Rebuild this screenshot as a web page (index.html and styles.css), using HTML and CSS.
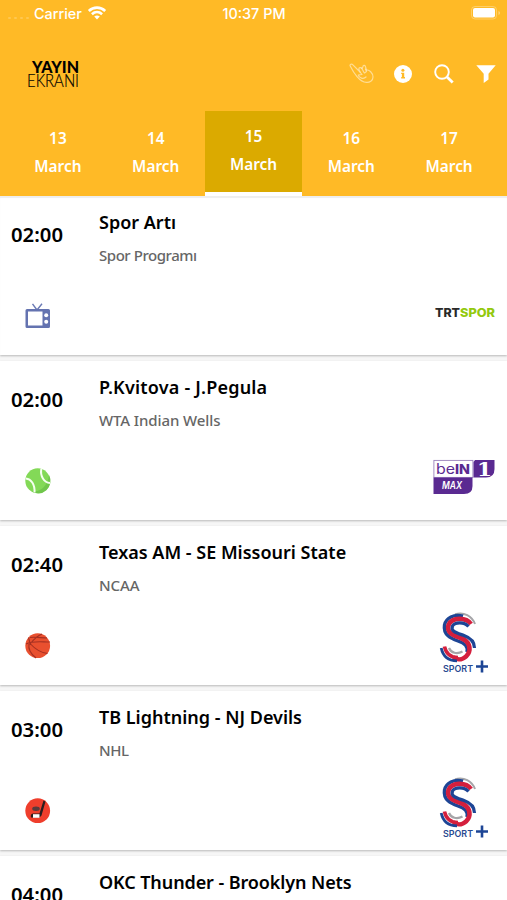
FILE: index.html
```
<!DOCTYPE html>
<html lang="en">
<head>
    <meta charset="utf-8" />
    <title>Yayın Ekranı</title>
    <link rel="stylesheet" href="styles.css">
</head>
<body>
    <svg class="defs" width="0" height="0">
        <symbol id="ssport" viewBox="0 0 50 64">
            <g fill="none">
                <path d="M16 2.200C25 -0.500 33 4 36 12" stroke="#a5a5a8" stroke-width="2" />
                <path d="M24 4.200C15 1.500 7 6 5.500 13C4 23 12 26.500 19 29C26 31.500 29 34 28 40" stroke="#1d4595" stroke-width="3.400" />
                <path d="M32 12C27 5 13 5 9.500 13C7 21 15 23.500 22 26C31 29.500 32 37 29 42C25 48 19 48.500 14 45.500" stroke="#d41f3d" stroke-width="4.600" />
                <path d="M29.500 14.500C25 9.500 16 10 13.500 14C11 19.500 18 21 25 23.500C32 26 35.500 30 35.500 36" stroke="#1d4595" stroke-width="3.200" />
                <path d="M10 36C12 41 18 42.500 23.500 39.500" stroke="#a5a5a8" stroke-width="2.200" />
                <path d="M5.500 34.500C7 42 12 45.500 19 45.500" stroke="#d41f3d" stroke-width="3.600" />
                <path d="M2.200 36C4 44.500 9.500 48.800 18 48.800" stroke="#1d4595" stroke-width="2.800" />
                <path d="M37 54.500H49M43 48.500V60.500" stroke="#1d4595" stroke-width="2.600" />
            </g>
            <text x="4" y="60" textLength="30" lengthAdjust="spacingAndGlyphs" class="ssport-text">SPORT</text>
        </symbol>
    </svg>

    <div class="header">
        <div class="status">
            <div class="carrier">
                <span class="dots"><i></i><i></i><i></i><i></i></span>
                <span>Carrier</span>
                <svg width="18" height="14" viewBox="0 0 18 14">
                    <g fill="none" stroke="#fff" stroke-width="2.600">
                        <path d="M0.800 5C5.500 0.500 12.500 0.500 17.200 5" />
                        <path d="M3.900 8.200C7 5.400 11 5.400 14.100 8.200" />
                    </g>
                    <path d="M6.200 10.600Q9 8.400 11.800 10.600L9 13.600Z" fill="#fff" />
                </svg>
            </div>
            <div class="clock">10:37 PM</div>
            <div class="battery">
                <svg width="30" height="14" viewBox="0 0 30 14">
                    <rect x="0.500" y="0.500" width="25" height="12.500" rx="3.500" fill="none" stroke="#fff" stroke-opacity="0.300" />
                    <rect x="2" y="2" width="22" height="9.500" rx="2" fill="#fff" />
                    <path d="M27.500 5V9Q29 8.500 29 7T27.500 5Z" fill="#fff" fill-opacity="0.400" />
                </svg>
            </div>
        </div>

        <div class="navbar">
            <svg class="logo" width="54" height="32" viewBox="0 0 54 32">
                <text x="5" y="13.500" textLength="47" lengthAdjust="spacingAndGlyphs" class="logo-bold">YAYIN</text>
                <text x="0" y="28" textLength="52" lengthAdjust="spacingAndGlyphs" class="logo-thin">EKRANI</text>
            </svg>
            <div class="actions">
                <svg width="26" height="22" viewBox="0 0 26 22">
                    <g fill="none" stroke="#fff" stroke-opacity="0.500" stroke-width="1.200" stroke-linejoin="round" stroke-linecap="round">
                        <path d="M1.200 3C0.400 1.400 2.600 0.500 3.900 1.800L11 9L9.800 6C10 4.300 12 4 12.900 5.500L13.900 4C13.800 2.200 15.800 1.900 16.400 3.400L17.500 7.200C20 6.200 24 10 24 14C24 18 20.500 19.600 17.500 19.400C13.500 19.200 10.500 16.500 8 13.600C6 11.300 3.500 7.600 1.200 3Z" />
                        <path d="M11 9L13 11.500L9.300 12C10 15 14.500 16.500 17 14M12.900 5.500L15 9.500M16.400 6L17.500 8.500L15.500 10" />
                    </g>
                </svg>
                <svg width="20" height="20" viewBox="0 0 20 20">
                    <circle cx="10" cy="10" r="9" fill="#fff" />
                    <circle cx="9.900" cy="6.200" r="1.500" fill="#ffba26" />
                    <path d="M8.200 8.700H11.200V13H12V14.500H8.200V13H8.900V10H8.200Z" fill="#ffba26" />
                </svg>
                <svg width="20" height="20" viewBox="0 0 20 20">
                    <circle cx="8" cy="8" r="6.800" fill="none" stroke="#fff" stroke-width="1.900" />
                    <path d="M12.800 12.800L18.700 18.500" stroke="#fff" stroke-width="2.800" />
                </svg>
                <svg width="20" height="20" viewBox="0 0 20 20">
                    <path d="M0.300 1.300H19.700L12.500 9.700V15.500L7.700 19V9.700Z" fill="#fff" />
                </svg>
            </div>
        </div>

        <div class="tabs">
            <div class="tab">13<br>March</div>
            <div class="tab">14<br>March</div>
            <div class="tab active">15<br>March</div>
            <div class="tab">16<br>March</div>
            <div class="tab">17<br>March</div>
        </div>
    </div>

    <div class="list">
        <div class="card">
            <div class="side">
                <div class="time">02:00</div>
                <svg class="sport" width="26" height="26" viewBox="0 0 26 26">
                    <path d="M7.500 0.800L12 7L17 0.800" fill="none" stroke="#6b7ab5" stroke-width="1.400" />
                    <path d="M2 6H23.500Q25 6 25 7.500V23.500Q25 25 23.500 25H2Q0.500 25 0.500 23.500V7.500Q0.500 6 2 6ZM3 8.500V22.500H17.500V8.500Z" fill="#6473b0" fill-rule="evenodd" />
                    <circle cx="21.200" cy="12.300" r="2" fill="#fff" />
                    <circle cx="21.200" cy="18.800" r="2" fill="#fff" />
                </svg>
            </div>
            <div class="info">
                <div class="title">Spor Artı</div>
                <div class="league">Spor Programı</div>
            </div>
            <svg class="channel" width="62" height="12" viewBox="0 0 62 12">
                <text x="2" y="10.200" textLength="25" lengthAdjust="spacingAndGlyphs" class="trt">TRT</text>
                <text x="27" y="10.200" textLength="35" lengthAdjust="spacingAndGlyphs" class="trt green">SPOR</text>
            </svg>
        </div>

        <div class="card">
            <div class="side">
                <div class="time">02:00</div>
                <svg class="sport" width="26" height="26" viewBox="0 0 26 26">
                    <circle cx="12.700" cy="12.700" r="12.400" fill="#83d957" />
                    <path d="M24 7A12.500 12.500 0 0 1 6 23.300C15 25 23 18 24 7Z" fill="#70c64b" />
                    <path d="M0.800 10.500C6 11 10 16 9.500 24.500M16.300 0.900C15 8 19 14.500 25 15" fill="none" stroke="#f5fff0" stroke-width="2" />
                </svg>
            </div>
            <div class="info">
                <div class="title wide">P.Kvitova - J.Pegula</div>
                <div class="league wide">WTA Indian Wells</div>
            </div>
            <svg class="channel" width="62" height="36" viewBox="0 0 62 36">
                <rect x="0.900" y="1.400" width="39" height="17" fill="#fff" stroke="#9b83bd" stroke-width="0.900" />
                <text x="3" y="14.500" textLength="19" lengthAdjust="spacingAndGlyphs" class="bein">be</text>
                <text x="22" y="14.500" textLength="15" lengthAdjust="spacingAndGlyphs" class="bein bold">IN</text>
                <path d="M0.500 18.500H39.500V27Q39.500 35 31 35H0.500Z" fill="#5a2a91" />
                <text x="9" y="30.200" textLength="20" lengthAdjust="spacingAndGlyphs" class="bein-max">MAX</text>
                <path d="M42 1H61.500V10Q61.500 18.500 53 18.500H40.500V3Z" fill="#5a2a91" />
                <text x="44" y="17" textLength="15" lengthAdjust="spacingAndGlyphs" class="bein-one">1</text>
            </svg>
        </div>

        <div class="card">
            <div class="side">
                <div class="time">02:40</div>
                <svg class="sport" width="26" height="26" viewBox="0 0 26 26">
                    <circle cx="12.700" cy="12.700" r="12.400" fill="#e9502f" />
                    <g fill="none" stroke="#a53022" stroke-width="1.100">
                        <path d="M5 4.500C9 3.500 17 5 22 5M1 11C8 7.500 16 9 25 9M5 11C9 6 12 3 17 1M4.500 10C10 16 17 20 22.500 20.500M4 11C3 16 6 21 11 25M3.500 4.500L5.500 12" />
                    </g>
                </svg>
            </div>
            <div class="info">
                <div class="title">Texas AM - SE Missouri State</div>
                <div class="league wide">NCAA</div>
            </div>
            <svg class="channel tall" width="50" height="64"><use href="#ssport" /></svg>
        </div>

        <div class="card">
            <div class="side">
                <div class="time">03:00</div>
                <svg class="sport" width="26" height="26" viewBox="0 0 26 26">
                    <circle cx="12.700" cy="12.700" r="12.400" fill="#ef3e2c" />
                    <ellipse cx="11" cy="10.800" rx="3.800" ry="2.200" fill="#5a3b3c" />
                    <path d="M18.500 2.500L20.500 3.500L16.500 17.500L14.500 19.500H6Q5 16 8 15.500H14.500Z" fill="#2b1d1e" />
                    <path d="M8 16.200H14.500V19.800H8Z" fill="#fff" />
                </svg>
            </div>
            <div class="info">
                <div class="title">TB Lightning - NJ Devils</div>
                <div class="league">NHL</div>
            </div>
            <svg class="channel tall" width="50" height="64"><use href="#ssport" /></svg>
        </div>

        <div class="card">
            <div class="side">
                <div class="time">04:00</div>
            </div>
            <div class="info">
                <div class="title narrow">OKC Thunder - Brooklyn Nets</div>
            </div>
        </div>
    </div>
</body>
</html>
```
FILE: styles.css
```
* {
    padding: 0;
    margin: 0;
    box-sizing: border-box;
}

body {
    width: 507px;
    height: 900px;
    overflow: hidden;
    background: #f6f6f6;
    font-family: "Noto Sans", "Open Sans", sans-serif;
}

svg {
    display: block;
    overflow: visible;
}

.defs {
    position: absolute;
}

/* header */

.header {
    height: 196px;
    background: #ffba26;
    color: #fff;
}

.status {
    display: grid;
    grid-template-columns: 1fr auto 1fr;
    align-items: center;
    height: 26px;
    padding: 0 6px 0 8px;
    font-family: Inter, sans-serif;
    font-size: 14.400px;
    font-weight: 500;
}

.clock {
    margin-left: -1px;
}

.carrier {
    display: flex;
    align-items: center;
}

.carrier svg {
    margin-left: 6px;
}

.dots {
    display: flex;
    gap: 3px;
    width: 26px;
    padding-top: 9px;
}

.dots i {
    width: 3px;
    height: 2px;
    border-radius: 1px;
    background: rgba(255, 255, 255, 0.2);
}

.battery {
    justify-self: end;
}

.navbar {
    display: flex;
    align-items: center;
    justify-content: space-between;
    height: 85px;
    padding: 11px 11px 0 27px;
}

.logo {
    margin-top: 1px;
}

.logo-bold {
    font: 900 17px Lato, sans-serif;
}

.logo-thin {
    font: 300 17px Lato, sans-serif;
    stroke: #000;
    stroke-width: 0.200px;
}

.actions {
    display: flex;
    align-items: center;
    gap: 22px;
}

.actions svg:first-child {
    margin-right: -4px;
}

.actions svg:nth-child(2) {
    margin-right: -1px;
}

.tabs {
    display: flex;
    height: 85px;
    padding: 0 9px;
}

.tab {
    width: 97.800px;
    height: 85px;
    padding-top: 14px;
    text-align: center;
    font-size: 15.400px;
    font-weight: 600;
    line-height: 27.500px;
}

.tab.active {
    padding-top: 12px;
    background: #dbaa00;
    border-bottom: 4px solid #fff;
}

/* program list */

.list {
    height: 704px;
    overflow: hidden;
}

.card {
    display: flex;
    height: 159px;
    margin-bottom: 6px;
    padding-right: 12px;
    background: #fff;
    box-shadow: 0 1px 2px rgba(0, 0, 0, 0.25);
}

.card:first-child {
    box-shadow: 0 1px 2px rgba(0, 0, 0, 0.25), inset 0 2px 1px #eee;
}

.card:last-child {
    height: 44px;
    margin-bottom: 0;
}

.side {
    display: flex;
    flex-direction: column;
    width: 99px;
    padding-top: 24px;
}

.time {
    padding-left: 11px;
    font-size: 20.300px;
    font-weight: 600;
    line-height: 28px;
}

.sport {
    margin: 55px 0 0 25px;
}

.info {
    flex: 1;
    padding-top: 13px;
}

.title {
    font-size: 18px;
    font-weight: 600;
    line-height: 27px;
    white-space: nowrap;
}

.title.wide {
    letter-spacing: 0.200px;
}

.title.narrow {
    letter-spacing: -0.100px;
}

.league {
    margin-top: 7px;
    color: #666;
    font-size: 15px;
    font-weight: 500;
    line-height: 25px;
    letter-spacing: -0.450px;
}

.league.wide {
    letter-spacing: -0.100px;
}

.channel {
    align-self: flex-start;
    margin-top: 111px;
}

.card:nth-child(2) .channel {
    margin-top: 98px;
}

.channel.tall {
    margin: 86px 6px 0 0;
}

/* channel logos */

.trt {
    fill: #292929;
    font: 800 12px Inter, sans-serif;
}

.trt.green {
    fill: #93c90e;
}

.bein {
    fill: #5a2a91;
    font: 400 14px Inter, sans-serif;
}

.bein.bold {
    font-weight: 800;
    font-size: 13px;
}

.bein-max {
    fill: #fff;
    font: italic 600 10px Inter, sans-serif;
}

.bein-one {
    fill: #fff;
    font: 700 19px "DejaVu Serif", serif;
}

.ssport-text {
    fill: #294a91;
    font: 600 9px Inter, sans-serif;
}
```
